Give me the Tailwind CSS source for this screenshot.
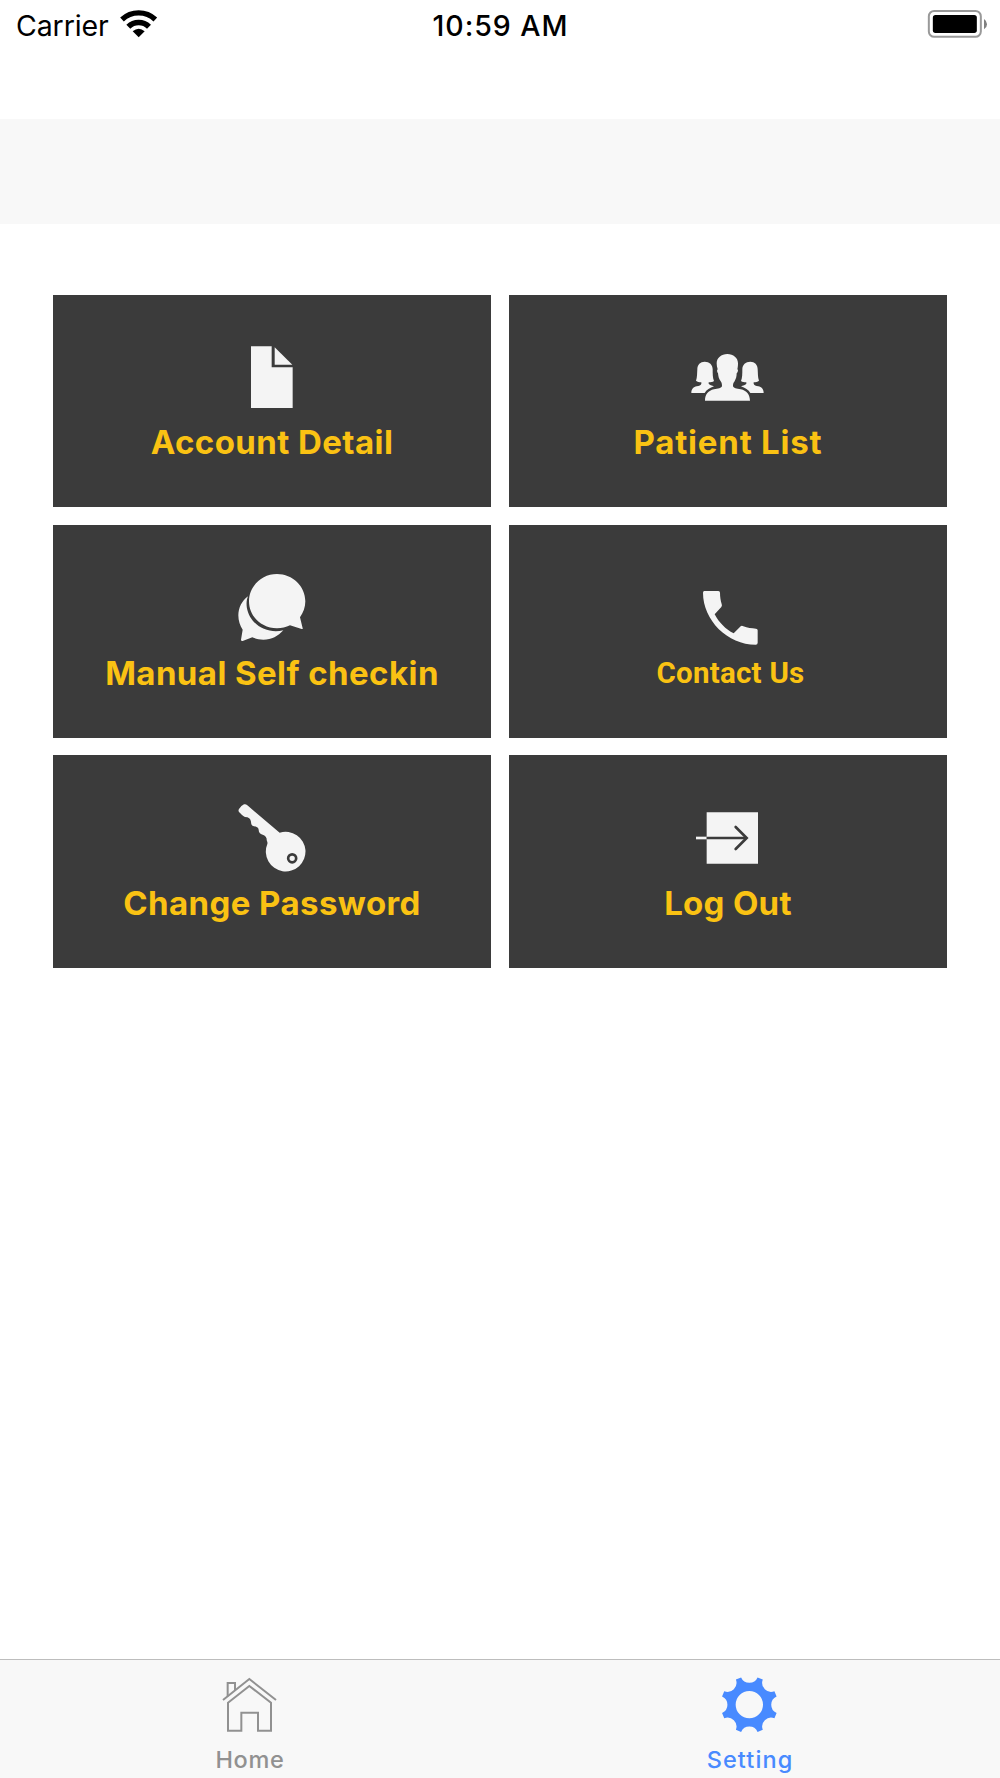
<!DOCTYPE html>
<html lang="en" class="h-full select-none">
<head>
<meta charset="utf-8">
<title>Setting</title>
<script src="https://cdn.jsdelivr.net/npm/@tailwindcss/browser@4"></script>
</head>
<body class="flex h-[1778px] w-[1000px] flex-col overflow-hidden bg-white font-[Inter,sans-serif] text-black">
<!-- status bar -->
<div class="grid h-[50px] shrink-0 grid-cols-3 text-[28.5px] leading-[52px]">
  <div class="flex pl-4">
    <span class="w-[104px] tracking-[-0.1px]">Carrier</span>
    <svg class="mt-2 h-[30px] w-[38px]" viewBox="360 24 114 90" fill="none" stroke="#000">
      <path d="M366 58.500A73 73 0 0 1 466 58.500" stroke-width="16"/>
      <path d="M385 80A44.500 44.500 0 0 1 447 80" stroke-width="17"/>
      <path d="M398 94Q416 79 434 94L416 112Z" fill="#000" stroke="none"/>
    </svg>
  </div>
  <div class="pl-px text-center font-medium tracking-[0.95px]">10:59 AM</div>
  <div class="flex justify-end pr-1.5">
    <svg class="mt-2 h-8 w-[68px]" viewBox="78 24 204 96">
      <rect x="86.500" y="33" width="156" height="77.500" rx="16" fill="none" stroke="#999" stroke-width="6"/>
      <rect x="98.500" y="45" width="132" height="54" rx="8"/>
      <path d="M252 57Q261 63 261 72.500Q261 82 252 88Z" fill="#808080"/>
    </svg>
  </div>
</div>
<!-- empty title bar -->
<div class="mt-[69px] h-[105px] shrink-0 bg-[#f8f8f8]"></div>

<main class="grid grow auto-rows-[212.6px] grid-cols-2 content-start gap-x-[18px] gap-y-[17.6px] px-[53px] pt-[70.8px] text-[33px] leading-10 font-bold tracking-[0.42px] text-[#fac213]">
  <a class="flex flex-col items-center bg-[#3b3b3b] pt-10">
    <svg class="size-20" viewBox="576 165 240 240" fill="#f4f4f4">
      <path d="M633 199H695V262H758V384H633Z"/>
      <path d="M704 202L757 254H704Z"/>
    </svg>
    <span class="mt-[7px]">Account Detail</span>
  </a>
  <a class="flex flex-col items-center bg-[#3b3b3b] pt-10">
    <svg class="size-20" viewBox="564 165 240 240" fill="#f4f4f4">
      <path d="M682 222C700 222 714 234 714 250C714 258 713 264 712 268C716 270 713 278 710 280C710 290 708 297 703 305C700 308 699 312 699 318C700 324 710 326 722 328C740 332 749 342 750 362H615C615 342 625 332 642 328C654 326 665 324 666 318C666 312 665 308 663 305C656 297 655 288 654 280C651 276 650 270 653 268C651 262 650 256 650 250C650 234 664 222 682 222Z"/>
      <path id="side" d="M614 245C628 245 638 254 638 268C638 282 638 294 642 303C638 306 632 307 626 307V311C628 314 636 317 642 319C630 323 619 330 614 339H574C574 327 581 321 590 319C597 317 603 316 604 311V307C598 307 592 305 588 302C592 292 591 280 592 268C592 254 601 245 614 245Z"/>
      <use href="#side" transform="translate(1365 0) scale(-1 1)"/>
    </svg>
    <span class="mt-[7px] tracking-[0.79px]">Patient List</span>
  </a>
  <a class="flex flex-col items-center bg-[#3b3b3b] pt-10">
    <svg class="size-20" viewBox="576 150 240 240" fill="#f4f4f4">
      <path d="M711 177C758 177 796 214 796 259C796 277 790 293 780 307L788 340Q789 343 785 342L750 331C738 337 725 340 711 340C664 340 627 304 627 259C627 214 664 177 711 177Z"/>
      <path d="M624 244C616 262 618 292 639 318C661 344 697 354 730 346C714 364 695 374 670 374C658 374 647 371 637 367L608 378Q603 379 603 374L608 344C600 332 595 318 595 301C595 278 606 257 624 244Z"/>
    </svg>
    <span class="mt-2">Manual Self checkin</span>
  </a>
  <a class="flex flex-col items-center bg-[#3b3b3b] pt-10">
    <svg class="size-20" viewBox="564 150 240 240" fill="#f4f4f4">
      <path d="M613 228H655Q660 228 660 233C660 245 662 257 665 267Q667 272 664 276L644 298C657 323 677 343 701 355L722 334Q725 331 730 334C742 339 755 340 768 341Q773 341 773 346V383Q773 389 767 389C683 389 609 316 609 233Q609 228 613 228Z"/>
    </svg>
    <span class="mt-2 pl-[5px] font-[Roboto,sans-serif] text-[29.5px] tracking-[0.25px]">Contact Us</span>
  </a>
  <a class="flex flex-col items-center bg-[#3b3b3b] pt-10">
    <svg class="size-20" viewBox="576 150 240 240" fill="#f4f4f4">
      <path d="M719 263A59.500 59.500 0 1 1 682 297C684 290 679 288 680 281C678 274 673 270 668 269C660 267 656 261 656 254C655 247 649 245 642 244C635 242 633 237 633 230C632 221 626 216 615 216C608 213 602 206 597 201Q594 197 597 192Q604 182 612 178Q617 176 622 181Z"/>
      <circle cx="756.500" cy="340" r="12" fill="none" stroke="#3b3b3b" stroke-width="8"/>
    </svg>
    <span class="mt-2">Change Password</span>
  </a>
  <a class="flex flex-col items-center bg-[#3b3b3b] pt-10">
    <svg class="size-20" viewBox="564 150 240 240" fill="none" stroke="#3b3b3b" stroke-width="8">
      <path d="M620 202H774V356H620Z" fill="#f4f4f4" stroke="none"/>
      <path d="M588 279H620" stroke="#f4f4f4"/>
      <path d="M620 279H738"/>
      <path d="M707 246L740 279L707 312" stroke-linecap="round"/>
    </svg>
    <span class="mt-2 tracking-[0.3px]">Log Out</span>
  </a>
</main>

<!-- tabs -->
<nav class="grid h-[119px] shrink-0 grid-cols-2 border-t border-[#bdbdbd] bg-[#f8f8f8] text-[23.5px] leading-7 font-medium">
  <a class="flex flex-col items-center pt-[15px] text-[#919191]">
    <svg class="size-15" viewBox="120 105 180 180" fill="none" stroke="currentColor" stroke-width="6">
      <path d="M129 180L208 117L288 180"/>
      <path d="M143 169V129H165V150"/>
      <path d="M144 188L208 138L273 188V272H234V218H184V272H144Z"/>
    </svg>
    <span class="mt-[11px] tracking-[0.7px]">Home</span>
  </a>
  <a class="flex flex-col items-center pt-[15px] text-[#488aff]">
    <svg class="size-15" viewBox="-88 -89 180 180" fill="currentColor">
      <path fill-rule="evenodd" d="M-24.700 -81.800A27 27 0 0 0 24.700 -81.800L40.400 -75.300A27 27 0 0 0 75.300 -40.400L81.800 -24.700A27 27 0 0 0 81.800 24.700L75.300 40.400A27 27 0 0 0 40.400 75.300L24.700 81.800A27 27 0 0 0 -24.700 81.800L-40.400 75.300A27 27 0 0 0 -75.300 40.400L-81.800 24.700A27 27 0 0 0 -81.800 -24.700L-75.300 -40.400A27 27 0 0 0 -40.400 -75.300ZM41 0A41 41 0 1 0 -41 0A41 41 0 1 0 41 0Z"/>
    </svg>
    <span class="mt-[11px] tracking-[1.1px]">Setting</span>
  </a>
</nav>
</body>
</html>
